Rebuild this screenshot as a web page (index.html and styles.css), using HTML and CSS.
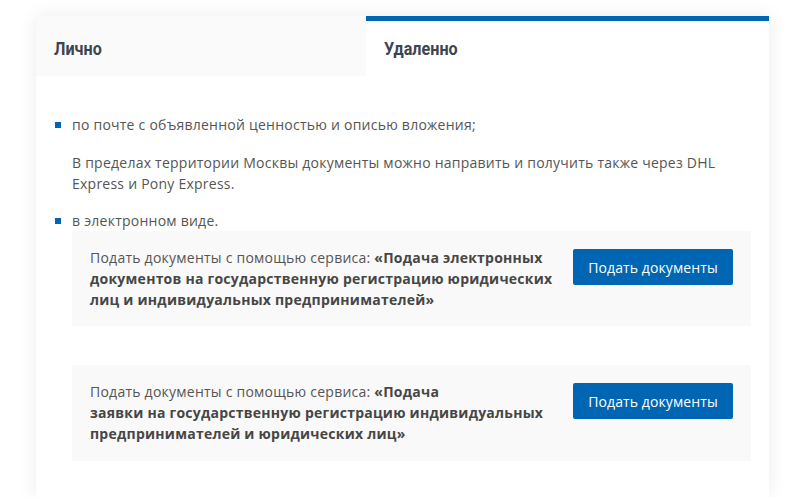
FILE: index.html
```html
<!DOCTYPE html>
<html lang="ru">
<head>
<meta charset="utf-8">
<link rel="stylesheet" href="styles.css">
</head>
<body>
<div class="wrap">
  <div class="tabs">
    <div class="tab"><span class="tab-label">Лично</span></div>
    <div class="tab tab-active"><span class="tab-label">Удаленно</span></div>
  </div>
  <div class="panel">
    <ul class="list">
      <li class="item">по почте с объявленной ценностью и описью вложения;
        <p class="note">В пределах территории Москвы документы можно направить и получить также через DHL Express и Pony Express.</p>
      </li>
      <li class="item item-last">в электронном виде.</li>
    </ul>
    <div class="service">
      <div class="service-text">Подать документы с помощью сервиса: <b>«Подача электронных документов на государственную регистрацию юридических лиц и индивидуальных предпринимателей»</b></div>
      <a class="btn">Подать документы</a>
    </div>
    <div class="service service-second">
      <div class="service-text">Подать документы с помощью сервиса: <b>«Подача<br>заявки на государственную регистрацию индивидуальных предпринимателей и юридических лиц»</b></div>
      <a class="btn">Подать документы</a>
    </div>
  </div>
</div>
</body>
</html>
```
FILE: styles.css
```css
html, body { margin: 0; padding: 0; background: #fff; }
body {
  font-family: "Open Sans", "Noto Sans", sans-serif;
  font-size: 14px;
  letter-spacing: 0.24px;
  color: #555;
}
.wrap {
  width: 733px;
  margin: 16px 0 0 36px;
  box-shadow: 0 0 18px rgba(0,0,0,0.08);
}
.tabs {
  display: grid;
  grid-template-columns: 330px 403px;
  height: 60px;
}
.tab {
  background: #fafafa;
  font-family: Roboto, "DejaVu Sans", sans-serif;
  font-weight: 700;
  font-size: 19px;
  letter-spacing: 0;
  color: #3d4550;
  padding-left: 18px;
  display: flex;
  align-items: center;
  padding-top: 5px;
  box-sizing: border-box;
}
.tab-label {
  display: inline-block;
  transform: scaleX(0.85);
  transform-origin: left center;
}
.tab-active {
  background: #fff;
  border-top: 5px solid #0066b3;
  padding-top: 0;
}
.panel {
  background: #fff;
  padding: 38px 18px 36px 36px;
}
.list { list-style: none; margin: 0 -18px 0 0; padding: 0; line-height: 21px; }
.item { position: relative; }
.item::before {
  content: "";
  position: absolute;
  left: -17px;
  top: 8px;
  width: 6px;
  height: 6px;
  background: #0066b3;
}
.note { margin: 17px 0 16px; }
.service {
  background: #f9f9f9;
  display: grid;
  grid-template-columns: 1fr 160px;
  column-gap: 18px;
  align-items: start;
  padding: 16px 18px;
  line-height: 21px;
}
.service-second { margin-top: 39px; padding-bottom: 17px; }
.service-text b { color: #464646; font-weight: 700; }
.btn {
  margin-top: 2px;
  height: 36px;
  background: #0066b3;
  color: #fff;
  border-radius: 2px;
  display: flex;
  align-items: center;
  justify-content: center;
  font-size: 14px;
  letter-spacing: 0.1px;
}
```
